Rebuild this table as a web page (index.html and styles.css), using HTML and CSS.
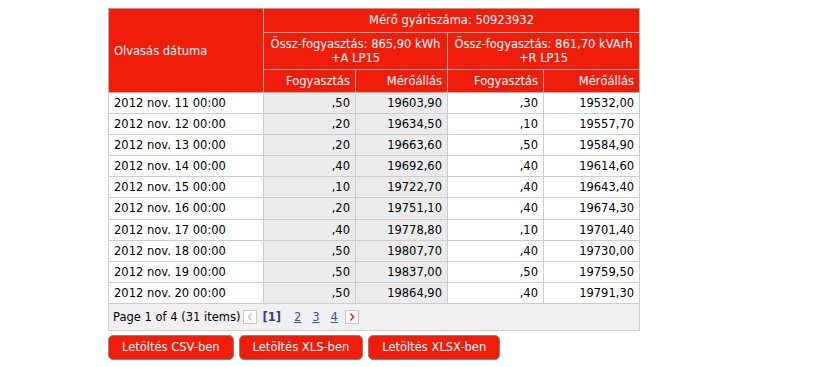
FILE: index.html
```html
<!DOCTYPE html>
<html lang="hu">
<head>
<meta charset="utf-8">
<title>Mérő adatok</title>
<link rel="stylesheet" href="styles.css">
</head>
<body>
<div class="wrap">
  <table class="grid">
    <colgroup>
      <col class="c-date">
      <col class="c-a">
      <col class="c-a">
      <col class="c-r">
      <col class="c-r">
    </colgroup>
    <thead>
      <tr>
        <th rowspan="3" class="h-date">Olvasás dátuma</th>
        <th colspan="4" class="h-center h-top">Mérő gyáriszáma: 50923932</th>
      </tr>
      <tr>
        <th colspan="2" class="h-center h-two">Össz-fogyasztás: 865,90 kWh<br>+A LP15</th>
        <th colspan="2" class="h-center h-two">Össz-fogyasztás: 861,70 kVArh<br>+R LP15</th>
      </tr>
      <tr>
        <th class="h-num">Fogyasztás</th>
        <th class="h-num">Mérőállás</th>
        <th class="h-num">Fogyasztás</th>
        <th class="h-num">Mérőállás</th>
      </tr>
    </thead>
    <tbody>
      <tr><td>2012 nov. 11 00:00</td><td class="num shade">,50</td><td class="num shade">19603,90</td><td class="num">,30</td><td class="num">19532,00</td></tr>
      <tr><td>2012 nov. 12 00:00</td><td class="num shade">,20</td><td class="num shade">19634,50</td><td class="num">,10</td><td class="num">19557,70</td></tr>
      <tr><td>2012 nov. 13 00:00</td><td class="num shade">,20</td><td class="num shade">19663,60</td><td class="num">,50</td><td class="num">19584,90</td></tr>
      <tr><td>2012 nov. 14 00:00</td><td class="num shade">,40</td><td class="num shade">19692,60</td><td class="num">,40</td><td class="num">19614,60</td></tr>
      <tr><td>2012 nov. 15 00:00</td><td class="num shade">,10</td><td class="num shade">19722,70</td><td class="num">,40</td><td class="num">19643,40</td></tr>
      <tr><td>2012 nov. 16 00:00</td><td class="num shade">,20</td><td class="num shade">19751,10</td><td class="num">,40</td><td class="num">19674,30</td></tr>
      <tr><td>2012 nov. 17 00:00</td><td class="num shade">,40</td><td class="num shade">19778,80</td><td class="num">,10</td><td class="num">19701,40</td></tr>
      <tr><td>2012 nov. 18 00:00</td><td class="num shade">,50</td><td class="num shade">19807,70</td><td class="num">,40</td><td class="num">19730,00</td></tr>
      <tr><td>2012 nov. 19 00:00</td><td class="num shade">,50</td><td class="num shade">19837,00</td><td class="num">,50</td><td class="num">19759,50</td></tr>
      <tr><td>2012 nov. 20 00:00</td><td class="num shade">,50</td><td class="num shade">19864,90</td><td class="num">,40</td><td class="num">19791,30</td></tr>
    </tbody>
    <tfoot>
      <tr>
        <td colspan="5" class="pager">
          <div class="pager-in">
            <span class="summary">Page 1 of 4 (31 items)</span>
            <span class="pbtn pbtn-off" aria-label="Előző">
              <svg width="6" height="8" viewBox="0 0 6 8"><path d="M4.5 0.5 L1.5 4 L4.5 7.5" fill="none" stroke="#c4c4c4" stroke-width="1.3"/></svg>
            </span>
            <span class="pcur">[1]</span>
            <a class="plink" href="#">2</a>
            <a class="plink" href="#">3</a>
            <a class="plink plink-last" href="#">4</a>
            <span class="pbtn" aria-label="Következő">
              <svg width="6" height="8" viewBox="0 0 6 8"><path d="M1.5 0.5 L4.5 4 L1.5 7.5" fill="none" stroke="#e0261a" stroke-width="1.5"/></svg>
            </span>
          </div>
        </td>
      </tr>
    </tfoot>
  </table>
  <div class="actions">
    <button class="btn" type="button">Letöltés CSV-ben</button>
    <button class="btn" type="button">Letöltés XLS-ben</button>
    <button class="btn" type="button">Letöltés XLSX-ben</button>
  </div>
</div>
</body>
</html>
```
FILE: styles.css
```css
html, body {
  margin: 0;
  padding: 0;
  background: #ffffff;
}
body {
  padding: 8px 0 0 108px;
  font-family: "DejaVu Sans", Verdana, sans-serif;
  font-size: 11.5px;
  color: #000;
}
.wrap {
  width: 532px;
}
.grid {
  border-collapse: collapse;
  table-layout: fixed;
  width: 532px;
  border: 1px solid #a0a0a0;
}
.c-date { width: 155px; }
.c-a { width: 92px; }
.c-r { width: 96px; }

.grid th {
  background: #f01d0b;
  color: #fff;
  font-weight: normal;
  border: 1px solid #c9a9a5;
  padding: 4px 5px 4px;
  line-height: 14px;
}
.grid thead tr:first-child th { border-top-color: #a0a0a0; }
.h-date { text-align: left; border-left-color: #a0a0a0; }
.h-center { text-align: center; }
.grid th.h-top { padding: 4px 5px 5px; }
.h-num { text-align: right; }

.grid td {
  border: 1px solid #cdcdcd;
  padding: 3px 5px 3.1px;
  line-height: 14px;
  white-space: nowrap;
}
.grid td.num { text-align: right; }
.grid td.shade { background: #ebebeb; }

.grid td.pager {
  background: #f0f0f0;
  padding: 6px 4px 6px;
  border-top: 1px solid #cdcdcd;
}
.pager-in {
  display: flex;
  align-items: center;
  height: 14px;
}
.summary { margin-right: 3px; }
.pbtn {
  display: inline-flex;
  align-items: center;
  justify-content: center;
  width: 12px;
  height: 12px;
  border: 1px solid #c8c8c8;
  background: #fff;
  box-sizing: content-box;
}
.pcur {
  font-weight: bold;
  color: #2b3f8c;
  margin: 0 13px 0 5px;
}
.plink {
  color: #3153b0;
  text-decoration: underline;
  margin-right: 11px;
}
.plink-last { margin-right: 7px; }

.actions {
  display: flex;
  gap: 5px;
  margin-top: 4px;
}
.btn {
  font-family: "DejaVu Sans", Verdana, sans-serif;
  font-size: 11.5px;
  color: #fff;
  background: #f01d0b;
  border: 1px solid #9a7c78;
  border-radius: 5px;
  height: 25px;
  padding: 0 13px;
  line-height: 14px;
}
```
